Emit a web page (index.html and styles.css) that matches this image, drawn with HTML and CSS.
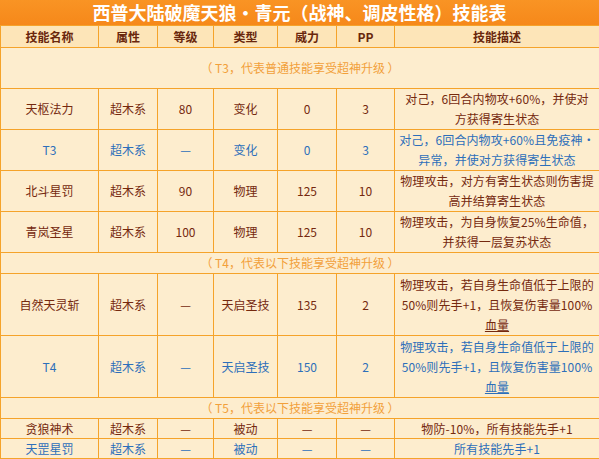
FILE: index.html
```html
<!DOCTYPE html>
<html lang="zh-CN">
<head>
<meta charset="utf-8">
<title>西普大陆破魔天狼•青元技能表</title>
<link rel="stylesheet" href="styles.css">
</head>
<body>
<div class="title">西普大陆破魔天狼•青元（战神、调皮性格）技能表</div>
<table class="skills">
  <colgroup>
    <col class="c1"><col class="c2"><col class="c3"><col class="c4"><col class="c5"><col class="c6"><col class="c7">
  </colgroup>
  <tr class="head">
    <th>技能名称</th><th>属性</th><th>等级</th><th>类型</th><th>威力</th><th>PP</th><th>技能描述</th>
  </tr>
  <tr class="note tall"><td colspan="7">（ T3，代表普通技能享受超神升级 ）</td></tr>
  <tr class="two">
    <td>天枢法力</td><td>超木系</td><td>80</td><td>变化</td><td>0</td><td>3</td>
    <td class="desc">对己，6回合内物攻+60%，并使对<br>方获得寄生状态</td>
  </tr>
  <tr class="two blue">
    <td>T3</td><td>超木系</td><td>—</td><td>变化</td><td>0</td><td>3</td>
    <td class="desc">对己，6回合内物攻+60%且免疫神·<br>异常，并使对方获得寄生状态</td>
  </tr>
  <tr class="two">
    <td>北斗星罚</td><td>超木系</td><td>90</td><td>物理</td><td>125</td><td>10</td>
    <td class="desc">物理攻击，对方有寄生状态则伤害提<br>高并结算寄生状态</td>
  </tr>
  <tr class="two">
    <td>青岚圣星</td><td>超木系</td><td>100</td><td>物理</td><td>125</td><td>10</td>
    <td class="desc">物理攻击，为自身恢复25%生命值，<br>并获得一层复苏状态</td>
  </tr>
  <tr class="note"><td colspan="7">（ T4，代表以下技能享受超神升级 ）</td></tr>
  <tr class="three">
    <td>自然天灵斩</td><td>超木系</td><td>—</td><td>天启圣技</td><td>135</td><td>2</td>
    <td class="desc">物理攻击，若自身生命值低于上限的<br>50%则先手+1，且恢复伤害量100%<br><span class="link">血量</span></td>
  </tr>
  <tr class="three blue">
    <td>T4</td><td>超木系</td><td>—</td><td>天启圣技</td><td>150</td><td>2</td>
    <td class="desc">物理攻击，若自身生命值低于上限的<br>50%则先手+1，且恢复伤害量100%<br><span class="link">血量</span></td>
  </tr>
  <tr class="note"><td colspan="7">（ T5，代表以下技能享受超神升级 ）</td></tr>
  <tr class="one">
    <td>贪狼神术</td><td>超木系</td><td>—</td><td>被动</td><td>—</td><td>—</td>
    <td class="desc">物防-10%，所有技能先手+1</td>
  </tr>
  <tr class="one blue">
    <td>天罡星罚</td><td>超木系</td><td>—</td><td>被动</td><td>—</td><td>—</td>
    <td class="desc">所有技能先手+1</td>
  </tr>
</table>
</body>
</html>
```

FILE: styles.css
```css
html, body {
  margin: 0;
  padding: 0;
  background: #fdedce;
}
body {
  width: 599px;
  font-family: "Noto Sans CJK SC", "Noto Sans", sans-serif;
  color: #75290e;
}
.title {
  height: 25px;
  line-height: 25px;
  background: linear-gradient(#f99424, #f6881a);
  color: #fff;
  font-size: 18px;
  font-weight: bold;
  text-align: center;
}
.skills {
  width: 599px;
  border-collapse: collapse;
  table-layout: fixed;
  font-size: 12px;
  background: #fdedce;
}
.c1 { width: 98px; }
.c2 { width: 59px; }
.c3 { width: 56px; }
.c4 { width: 64px; }
.c5 { width: 59px; }
.c6 { width: 58px; }
.c7 { width: 205px; }
.skills th,
.skills td {
  border: 1px solid #f5a32a;
  padding: 0;
  text-align: center;
  vertical-align: middle;
  line-height: 20px;
  white-space: nowrap;
  overflow: hidden;
}
.skills th {
  background: #fde5b8;
  font-weight: bold;
  color: #6a270c;
  height: 21px;
  line-height: 21px;
}
.note td {
  color: #f2a03a;
  height: 20px;
}
.note.tall td {
  height: 40px;
}
.two td { height: 40px; }
.three td { height: 61px; }
.one td { height: 19px; line-height: 19px; }
.blue td { color: #2d6fba; }
.desc { letter-spacing: 0.1px; }
.link { text-decoration: underline; }
```
